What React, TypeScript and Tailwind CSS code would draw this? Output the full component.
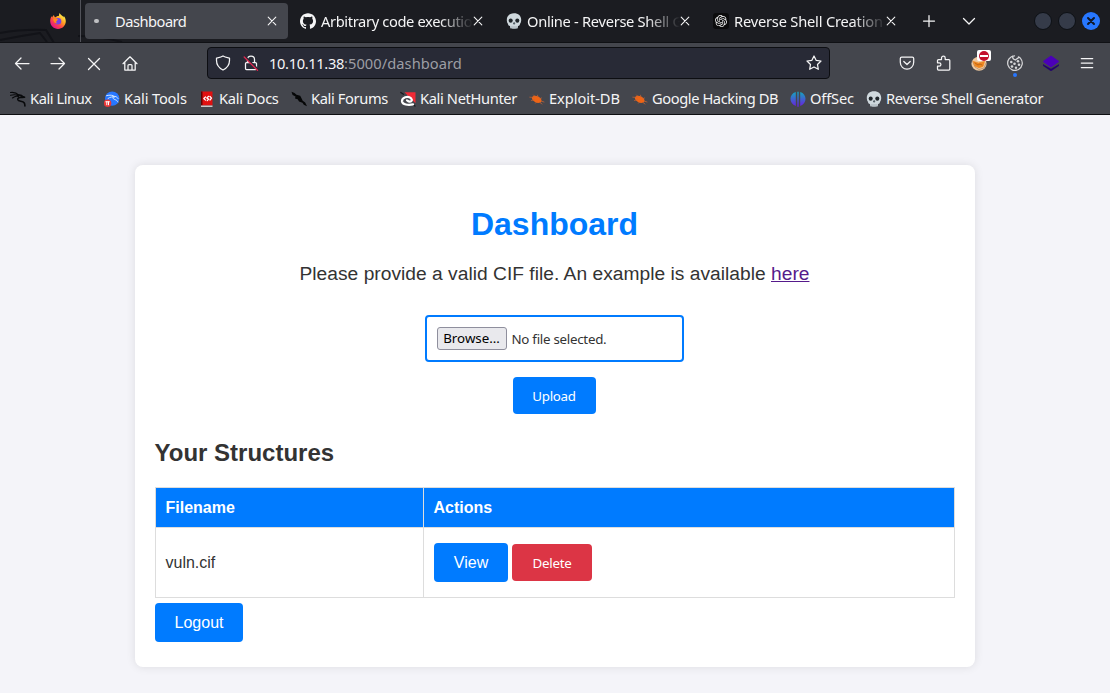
import { type ReactNode } from "react";
import { SiGithub, SiOpenai } from "react-icons/si";

const UI = "font-['Noto_Sans',sans-serif]";

function Svg({ children, className = "", size = 16, vb = "0 0 16 16" }: { children: ReactNode; className?: string; size?: number; vb?: string }) {
  return (
    <svg width={size} height={size} viewBox={vb} fill="none" stroke="currentColor" strokeWidth="1.25" strokeLinecap="round" strokeLinejoin="round" className={`shrink-0 ${className}`}>
      {children}
    </svg>
  );
}

function Skull() {
  return (
    <Svg>
      <path d="M8 .3C3.600.3.800 3 .800 6.900c0 1.600.4 2.700 1 3.600.4.7.2 1.900 1.200 2.300l1 .3.3 2.200c1.200.6 6.200.6 7.400 0l.3-2.200 1-.3c1-.4.8-1.600 1.200-2.300.6-.9 1-2 1-3.600C15.200 3 12.400.3 8 .3z" fill="#cfd8dd" stroke="none" />
      <ellipse cx="4.700" cy="7.600" rx="2" ry="2.200" fill="#20262b" stroke="none" />
      <ellipse cx="11.300" cy="7.600" rx="2" ry="2.200" fill="#20262b" stroke="none" />
      <path d="M8 9.600l-.6 1.400h1.200z" fill="#36414a" stroke="#36414a" strokeWidth=".6" />
      <path d="M6 13.500v1.800M8 13.500v2M10 13.500v1.800" stroke="#87939b" strokeWidth=".6" />
    </Svg>
  );
}

function Firefox() {
  return (
    <Svg>
      <defs>
        <linearGradient id="ff" x1="13" y1="2" x2="3" y2="14" gradientUnits="userSpaceOnUse">
          <stop stopColor="#fff44f" /><stop offset=".35" stopColor="#ffa322" /><stop offset=".65" stopColor="#ff4a45" /><stop offset="1" stopColor="#e31587" />
        </linearGradient>
      </defs>
      <path d="M9.700 0c-.9 1.300-.5 2.200-1 3C7.300 2.800 6.200 3.500 5.600 4.200 4.600 4.200 4 3.200 4 2.100 2.700 3 2.500 4 2.300 4.500L1.500 3.300C.6 5 .1 6.800.2 8.600.4 12.700 3.700 16 8 16s7.800-3.400 7.800-7.700c0-2.500-1-4.500-2.300-5.400l.3 1.700C12.600 2.300 10.300 2 9.700 0z" fill="url(#ff)" stroke="none" />
      <circle cx="8" cy="8.200" r="3.300" fill="#7542e5" stroke="none" />
      <path d="M3 6c2-1.300 4-.5 5 .5L6.800 8C5.600 8.200 5.900 9.900 7.500 10c-2 1-3.800-.5-4.500-4z" fill="#ff8a1c" stroke="none" />
    </Svg>
  );
}

function Dragon() {
  return (
    <Svg className="text-[#08090b]">
      <path d="M.5 1.500c3-.5 6 .3 8.500 2.700M.5 4.200c3-.8 5.500-.7 8 .3M2.500 7C4.500 5.300 6.500 5 8.500 5.500" strokeWidth="1.100" />
      <path d="M8 4.300c2.500-.5 4 .3 4.600 1.200l2 .8-2.600.2C9.500 6 7.300 7 7.800 8.700c.8 2.100 5 1 6.500 3.300.6 1 .5 1.900.6 3" strokeWidth="1.600" />
    </Svg>
  );
}

function KaliTools() {
  return (
    <Svg>
      <circle cx="8.200" cy="7.600" r="7.200" fill="#2777ff" stroke="none" />
      <path d="M2.500 4.700C6 3.700 9 4 10.500 5.500M4 7.500c2-1.500 4.500-2 6.500-1.500M9 5.500c3-.7 4 .5 5 2M9 6.500c-.5 2.800 4 1.300 5 4.500" stroke="#cee5ff" strokeWidth="1" />
      <circle cx="3.600" cy="12.200" r="3.700" fill="#e93636" stroke="none" />
      <path d="M1.800 10.800h3.600M2.800 10.800v3M4.500 10.800v3" stroke="#fff" strokeWidth="1" />
    </Svg>
  );
}

function KaliDocs() {
  return (
    <Svg>
      <path d="M2 .5h11.500v14H2z" fill="#e01010" stroke="none" />
      <path d="M2 .5h1.500v14H2z" fill="#650000" stroke="none" />
      <path d="M2 14.500h11.500V16H2z" fill="#c9c9c9" stroke="none" />
      <path d="M6.500 6L4.800 7.500 6.500 9.200M11 5.500l1.500 1.700L11 9M9.700 5.300L7.700 7l2 1-1.500 1.700" stroke="#fff" strokeWidth="1.200" />
    </Svg>
  );
}

function Forums() {
  return (
    <Svg>
      <path d="M.5.800l3 1.200 2 1.700 3.700 1 1.300 2.500 1.200 2.500 2.500 1.700 1.800 3.900-3.200-1.500-1.300-2-3.500-1.200L6.700 8.200 4 7.500l.5-2L1.600 4z" fill="#050607" stroke="none" />
    </Svg>
  );
}

function NetHunter() {
  return (
    <Svg>
      <path d="M4.500 1.200h11v11z" fill="#f02a36" stroke="none" />
      <path d="M.8 1.500l2.700 1.700M13 14l2 1" stroke="#17191c" strokeWidth="1.300" />
      <path d="M13 13.400C8 14.500 2.500 13.500 2 10.500 1.500 6.500 8 4.200 11 7.300c1.800 2.200 0 3.500-1.500 3.400-1.300 0-1.600-.8-2.500-1.300" stroke="#fff" strokeWidth="2.200" />
    </Svg>
  );
}

function Bug() {
  return (
    <Svg>
      <ellipse cx="7.700" cy="8.300" rx="5.100" ry="3.200" transform="rotate(25 7.700 8.300)" fill="#f06414" stroke="none" />
      <path d="M.8 6.200l4 .3M2.500 9.500l3-.8M4.500 4l2 2M8.500 4.200l.5 2M12.500 7l-2 .8M15 11l-3-1M6.500 12.200l1.500-1.500M13 13l-2-1.500" stroke="#c96535" strokeWidth=".7" />
    </Svg>
  );
}

function OffSec() {
  return (
    <Svg>
      <defs><linearGradient id="of" x1="8" y1="1" x2="8" y2="15" gradientUnits="userSpaceOnUse"><stop stopColor="#15a5be" /><stop offset="1" stopColor="#6722df" /></linearGradient></defs>
      <path d="M5.800 1C-1.300 3-1.300 12.500 5.800 15zM10.200 1C17.300 3 17.300 12.500 10.200 15zM7.300.8h1.400v15H7.300z" fill="url(#of)" stroke="none" />
    </Svg>
  );
}

function Close() {
  return <Svg size={10} vb="0 0 10 10"><path d="M1.200 1.200l7.600 7.600M8.800 1.200L1.200 8.800" strokeWidth="1.100" /></Svg>;
}

function Tab({ icon, title, box, text }: { icon: ReactNode; title: string; box: string; text: string }) {
  return (
    <div className={`flex h-[36px] shrink-0 items-center pl-3 ${box}`}>
      {icon}
      <span className={`ml-[5px] shrink-0 overflow-hidden whitespace-nowrap [mask-image:linear-gradient(to_right,black_78%,transparent)] ${text}`}>{title}</span>
      <Close />
    </div>
  );
}

const bookmarks = [
  { icon: <Dragon />, label: "Kali Linux", w: "w-[94px] tracking-[-0.44px]" },
  { icon: <KaliTools />, label: "Kali Tools", w: "w-[95px] tracking-[-0.15px]" },
  { icon: <KaliDocs />, label: "Kali Docs", w: "w-[92px] tracking-[-0.3px]" },
  { icon: <Forums />, label: "Kali Forums", w: "w-[109px] tracking-[-0.37px]" },
  { icon: <NetHunter />, label: "Kali NetHunter", w: "w-[129px] tracking-[-0.36px]" },
  { icon: <Bug />, label: "Exploit-DB", w: "w-[103px] tracking-[-0.07px]" },
  { icon: <Bug />, label: "Google Hacking DB", w: "w-[158px] tracking-[-0.41px]" },
  { icon: <OffSec />, label: "OffSec", w: "w-[76px] tracking-[-0.15px]" },
  { icon: <Skull />, label: "Reverse Shell Generator", w: "w-[180px] tracking-[-0.35px]" },
];

function Browser() {
  return (
    <header className={`h-[115px] border-b border-[#0d0e12] bg-[#44464d] text-[14.67px] text-[#f5f5f6] ${UI}`}>
      <div className="relative flex h-[43px] items-center overflow-hidden border-b border-[#101115] bg-[#1b1c21]">
        <svg className="absolute left-0 top-[28px]" width="125" height="15" fill="none" stroke="#121318" strokeWidth="2"><path d="M0 5Q22 1 46 2l8 13M0 12Q20 8 40 5l7 9M78 8Q100 8 122 14" /></svg>
        <div className="relative flex h-full w-[81px] shrink-0 items-center border-r border-[#515259] pl-[50px]"><Firefox /></div>
        <div className="relative ml-1 flex h-[36px] w-[203px] shrink-0 items-center rounded bg-[#44464d] pl-[9px]">
          <span className="h-1 w-[5px] rounded-full bg-[#bfc0c2]" />
          <span className="ml-[16px] w-[152px] tracking-[-0.5px]">Dashboard</span><Close />
        </div>
        <Tab icon={<SiGithub size={16} />} title="Arbitrary code execution" box="w-[206px] tracking-[-0.36px]" text="w-[152px]" />
        <Tab icon={<Skull />} title="Online - Reverse Shell Generator" box="w-[207px] tracking-[-0.3px]" text="w-[153px]" />
        <Tab icon={<span className="flex h-4 w-4 shrink-0 items-center justify-center rounded-[3px] bg-[#0c0c0d]"><SiOpenai size={12} /></span>} title="Reverse Shell Creation Guide" box="w-[212px] tracking-[-0.2px]" text="w-[152px]" />
        <Svg className="ml-[8px]"><path d="M8 2.500v11M2.500 8h11" /></Svg>
        <Svg className="ml-[24px]"><path d="M2.500 5.500L8 11l5.500-5.500" /></Svg>
        <div className="ml-auto flex gap-1.5 pr-[10px]">
          <span className="h-[18px] w-[18px] rounded-full border border-[#0d1015] bg-[#353b49]" />
          <span className="h-[18px] w-[18px] rounded-full border border-[#0d1015] bg-[#353b49]" />
          <span className="flex h-[18px] w-[18px] items-center justify-center rounded-full bg-[#2777ff] text-[#101828]"><Svg size={10} vb="0 0 10 10"><path d="M2 2l6 6M8 2L2 8" strokeWidth="2" /></Svg></span>
        </div>
      </div>
      <div className="flex h-[40px] items-center pl-[14px]">
        <Svg><path d="M15 8.500H1.500M7 3L1.500 8.500 7 14" /></Svg>
        <Svg className="ml-5"><path d="M1 8.500h13.500M9 3l5.500 5.500L9 14" /></Svg>
        <Svg className="ml-5"><path d="M2.500 3.500l11 11M13.500 3.500l-11 11" /></Svg>
        <Svg className="ml-5"><path d="M1 8.700L8 1.800l7 6.900M2.800 7.300v7.800h10.400V7.300M6 14.800V10.500q0-1 1-1h2q1 0 1 1v4.300" /></Svg>
        <div className="ml-[69px] flex h-8 w-[623px] items-center rounded border border-[#0d0e12] bg-[#282a36] px-[7px]">
          <Svg><path d="M8 1c2 1.200 4.200 1.500 6.500 2v2.500c0 4.500-2.500 7.500-6.500 9.500-4-2-6.500-5-6.500-9.500V3C3.800 2.500 6 2.200 8 1z" /></Svg>
          <Svg className="ml-3"><path d="M4.500 7V4.500c0-2 1.500-3.500 3.500-3.500s3.500 1.500 3.500 3.500V7M3.500 7.500h9q1 0 1 1v5q0 1-1 1h-9q-1 0-1-1v-5q0-1 1-1z" /><path d="M2.200 2l13 13" stroke="#282a36" strokeWidth="2.400" /><path d="M1.200 2l13.300 13.300" stroke="#e22850" strokeWidth="1.300" /></Svg>
          <span className="ml-[10px] flex-1"><span className="tracking-[-0.35px]">10.10.11.38</span><span className="text-[#9d9ea4] tracking-[0.05px]">:5000/dashboard</span></span>
          <Svg><path d="M8 1l2.100 4.300 4.900.7-3.500 3.500.8 4.800L8 12l-4.300 2.300.8-4.800L1 6l4.900-.7z" /></Svg>
        </div>
        <div className="ml-[69px] flex gap-5">
          <Svg><path d="M2.700 2.200h10.600q1.400 0 1.400 1.400v3.700c0 9-13.400 9-13.400 0V3.600q0-1.400 1.400-1.400zM4.800 6.500L8 9.500l3.200-3" /></Svg>
          <Svg><path d="M6.500 4.500V3c0-2.400 3.700-2.400 3.700 0v1.500h3.600q1 0 1 1V14q0 1-1 1H3.500q-1 0-1-1v-2.800h1.700c2.300 0 2.300-3.400 0-3.400H2.500V5.500q0-1 1-1z" /></Svg>
          <span className="relative h-4 w-4">
            <Svg><ellipse cx="8" cy="8.800" rx="7.600" ry="7" fill="#efc9a0" stroke="none" /><path d="M1 5l3 7 4 2.500 5-1.500 2-5" stroke="#8b6b50" strokeWidth=".5" /><path d="M2.500 6.500l5 1.500 6-1.500-1.500 5-4 1.200-4-1.700z" fill="#ee861f" stroke="#ee861f" strokeWidth=".7" /><path d="M4 8l3 2 2-1 2 1" stroke="#9c4f12" strokeWidth=".6" /></Svg>
            <span className="absolute left-[6px] top-[-5px] flex h-[11px] w-[14px] items-center justify-center rounded-[2px] bg-white"><span className="flex h-[10px] w-[10px] items-center justify-center rounded-full bg-[#c4102d]"><i className="h-0.5 w-[8px] bg-white" /></span></span>
          </span>
          <span className="relative h-4 w-4 text-[#d6d6d8]"><Svg><path d="M7.500.8a7.300 7.300 0 106 2.500L11.500 1.800q-.3 2-1.700 2L8.500 5Q5 4 5.800 1" /><g fill="currentColor" stroke="none"><circle cx="4.300" cy="7" r="1.300" /><circle cx="7.500" cy="8.700" r="1.300" /><circle cx="11" cy="6.300" r="1.300" /><circle cx="5" cy="11.500" r="1.300" /><circle cx="9" cy="12.700" r="1.200" /><circle cx="12" cy="9.800" r="1.300" /></g></Svg><span className="absolute left-1.5 top-[18px] h-1 w-1 rounded-full bg-[#2777ff]" /></span>
          <Svg><path d="M.2 9.500L8 14l7.800-4.500v1.200L8 16 .2 10.700z" fill="#23006f" stroke="#23006f" strokeWidth=".4" /><path d="M8 .5l7.800 5.500v1L8 12.500.2 7V6z" fill="#4b00b8" stroke="none" /></Svg>
          <Svg><path d="M2.300 3.500h11.400M2.300 8h11.400M2.300 12.500h11.400" /></Svg>
        </div>
      </div>
      <nav className="flex h-[32px] items-center pl-[10px]">
        {bookmarks.map((b) => <div key={b.label} className={`flex shrink-0 items-center gap-1 whitespace-nowrap ${b.w}`}>{b.icon}<span className="pb-[2px]">{b.label}</span></div>)}
      </nav>
    </header>
  );
}

export default function App() {
  return (
    <div className="h-[693px] w-[1110px] overflow-hidden bg-[#f4f4f9] font-['Liberation_Sans',sans-serif] text-base text-[#333]">
      <Browser />
      <main className="mx-auto mt-[50px] h-[502px] w-[840px] rounded-lg bg-white px-5 pt-[38px] shadow-[0_0_10px_rgba(0,0,0,0.1)]">
        <div className="pr-px">
          <h1 className="text-center text-[32px] font-bold leading-[42px] text-[#007bff]">Dashboard</h1>
          <p className="mt-[16px] text-center text-[19.2px] leading-[26px] tracking-[0.02px]">Please provide a valid CIF file. An example is available <a className="text-[#551a8b] underline">here</a></p>
        </div>
        <div className={`flex flex-col items-center pr-[2px] text-[13.333px] ${UI}`}>
          <div className="mt-[28px] flex h-[47px] w-[259px] items-center rounded border-2 border-[#007bff] pl-[10px]">
            <button className="h-[23px] w-[70px] rounded-[3px] border border-[#8f8f9d] bg-[#e9e9ed] pt-px text-black">Browse…</button>
            <span className="ml-[5px] pt-[2px] tracking-[-0.27px]">No file selected.</span>
          </div>
          <button className="mt-[15px] h-[37px] w-[83px] rounded bg-[#007bff] pt-[2px] tracking-[-0.3px] text-white">Upload</button>
        </div>
        <h2 className="-ml-[0.5px] mt-[24px] text-2xl font-bold leading-[30px]">Your Structures</h2>
        <table className="mt-[19px] w-full border-collapse text-left">
          <thead><tr className="h-[40px] bg-[#007bff] text-white"><th className="w-[268px] border border-[#ddd] px-[9.5px]">Filename</th><th className="border border-[#ddd] px-[9.5px]">Actions</th></tr></thead>
          <tbody><tr className="h-[70px]"><td className="border border-[#ddd] px-[9.5px]">vuln.cif</td><td className="border border-[#ddd] px-[10px]"><div className="flex items-center gap-1"><button className="h-[39px] w-[74px] rounded bg-[#007bff] text-white">View</button><button className={`h-[37px] w-[80px] rounded bg-[#dc3545] pt-[2px] text-[13.333px] tracking-[-0.25px] text-white ${UI}`}>Delete</button></div></td></tr></tbody>
        </table>
        <button className="mt-[5px] h-[39px] w-[88px] rounded bg-[#007bff] text-white">Logout</button>
      </main>
    </div>
  );
}
